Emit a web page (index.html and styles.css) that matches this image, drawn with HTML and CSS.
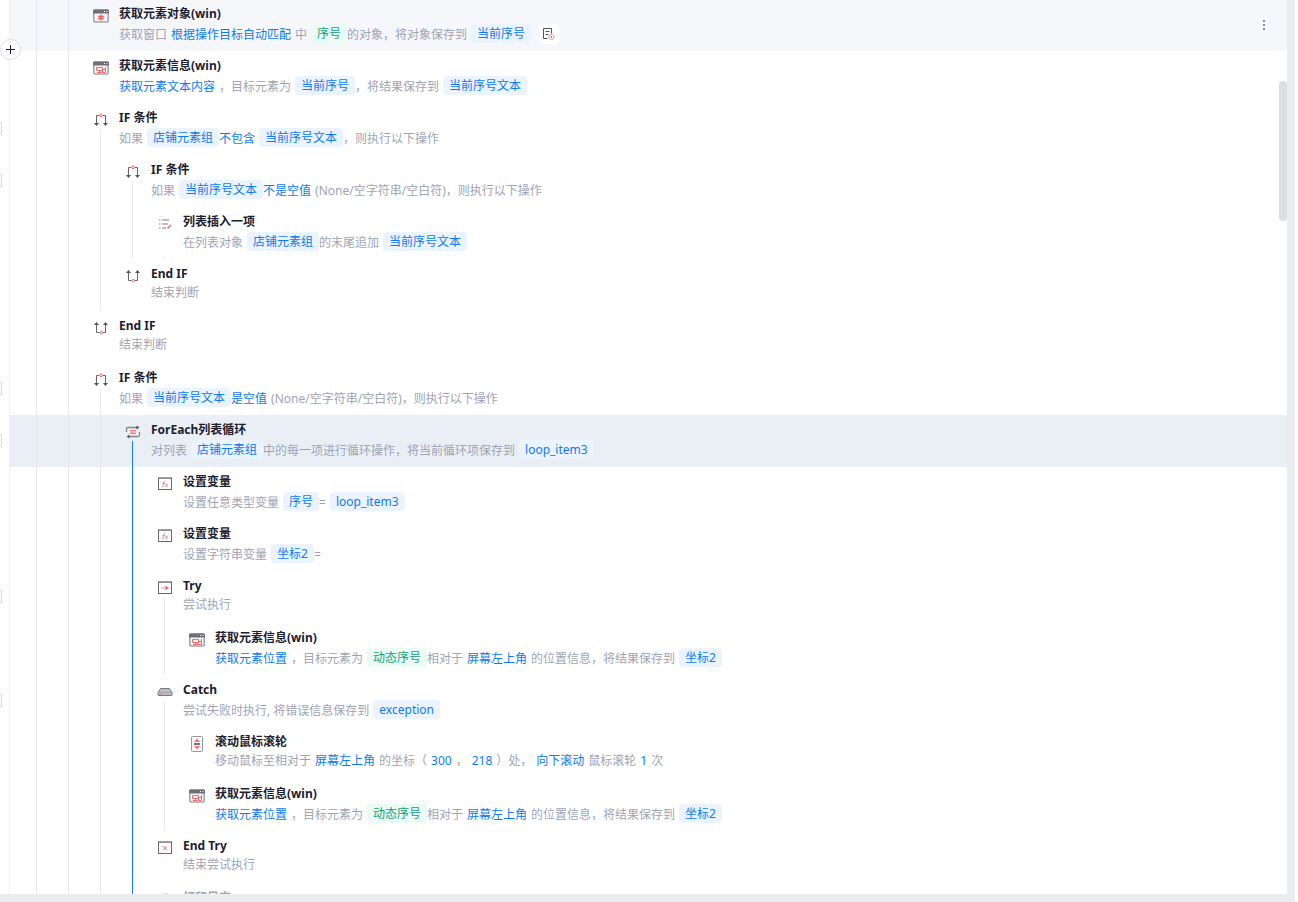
FILE: index.html
```
<!DOCTYPE html>
<html lang="zh-CN">

<head>
    <meta charset="UTF-8">
    <meta name="viewport" content="width=device-width, initial-scale=1.0">
    <title>流程编辑</title>
    <link rel="stylesheet" href="styles.css">
</head>

<body>
    <!-- 图标 -->
    <svg class="sprite" aria-hidden="true">
        <symbol id="i-window" viewBox="0 0 16 16">
            <rect x="0.8" y="2" width="14.4" height="12" rx="1" fill="#f6f6f8" stroke="#a5a5ad" stroke-width="1.6" />
            <path d="M0 5.500V3Q0 1.500 1.500 1.500H14.500Q16 1.500 16 3V5.500Z" fill="#6f6e78" />
            <path d="M11 3h1v1h-1zM13.500 3h1v1h-1z" fill="#fff" />
        </symbol>
        <symbol id="i-object" viewBox="0 0 16 16">
            <use href="#i-window" />
            <path d="M8 6.500v6M5.200 8l5.600 3M10.800 8l-5.600 3" stroke="#f96b6b" stroke-width="1.600" />
            <circle cx="8" cy="9.500" r="2" fill="#f96b6b" />
        </symbol>
        <symbol id="i-info" viewBox="0 0 16 16">
            <use href="#i-window" />
            <path d="M3.500 7.500h6v3h-6zM4 12.500h4M6.500 10.500v2M9.500 9.500h3v3h-3zM12.500 7v3" fill="none" stroke="#f96b6b" />
        </symbol>
        <symbol id="i-if" viewBox="0 0 16 16">
            <path d="M6 3.500H3.500V13M10 3.500h2.500V13" fill="none" stroke="#66656e" />
            <path d="M1 11h5L3.500 14zM10 11h5L12.500 14z" fill="#55545c" />
            <circle cx="8" cy="3.300" r="1.300" fill="#fff" stroke="#f95f5f" />
        </symbol>
        <symbol id="i-endif" viewBox="0 0 16 16">
            <path d="M6.500 12.500H3.500V3M10 12.500h2.500V3" fill="none" stroke="#66656e" />
            <path d="M1 5h5L3.500 2zM10 5h5L12.500 2z" fill="#55545c" />
            <circle cx="8.300" cy="12.700" r="1.300" fill="#fff" stroke="#f95f5f" />
        </symbol>
        <symbol id="i-list" viewBox="0 0 16 16">
            <path d="M2 4h1.500M2 8h1.500M2 12h1.500M5 4h7M5 8h6M5 12h4" stroke="#a6a6ad" stroke-width="1.500" />
            <path d="M10.500 12.500L14 9" stroke="#f95f5f" stroke-width="1.500" />
        </symbol>
        <symbol id="i-loop" viewBox="0 0 16 16">
            <path d="M1.500 8V5q0-1.500 1.500-1.500H13M14.500 8v3q0 1.500-1.500 1.500H3" fill="none" stroke="#86858d" stroke-width="1.300" />
            <path d="M11.500 1.500L14.500 3.500 11.500 5.500zM4.500 10.500L1.500 12.500 4.500 14.500z" fill="#55545c" />
            <path d="M5 6h6v4H5z" fill="#fbb5b5" />
            <path d="M5 6.500h6M5 9.500h6" stroke="#f98080" />
        </symbol>
        <symbol id="i-box" viewBox="0 0 16 16">
            <rect x="1.500" y="1.500" width="13" height="12" fill="#fff" stroke="#6a6973" />
            <path d="M1 1.500h14" stroke="#a0a0a8" />
            <path d="M2 2.500h12" stroke="#8d8d95" />
        </symbol>
        <symbol id="i-var" viewBox="0 0 16 16">
            <use href="#i-box" />
            <path d="M8.300 5.300c-1.300-.5-1.500.7-1.800 2.700s-.4 3.300-1.500 3M5.500 7.500h2.300M8.500 7.500l2 3.500M11.200 7.300L8 11" fill="none" stroke="#f97575" stroke-width=".9" />
        </symbol>
        <symbol id="i-try" viewBox="0 0 16 16">
            <use href="#i-box" />
            <path d="M4 8h5" stroke="#fab0b0" stroke-width="1.500" />
            <path d="M8.500 5.500L12 8l-3.500 2.500z" fill="#f96b6b" />
        </symbol>
        <symbol id="i-endtry" viewBox="0 0 16 16">
            <use href="#i-box" />
            <path d="M6 6.200l4 4M10 6.200l-4 4" stroke="#f95f5f" />
        </symbol>
        <symbol id="i-catch" viewBox="0 0 16 16">
            <path d="M3.500 4.500h9l2.500 4V11q0 .5-.5.5h-13q-.5 0-.5-.5V8.500z" fill="#bdbdc3" stroke="#7b7a83" />
            <path d="M1 8.500h14" stroke="#a5a5ad" />
            <path d="M2.500 10h2" stroke="#f95f5f" />
        </symbol>
        <symbol id="i-scroll" viewBox="0 0 16 16">
            <rect x="2.500" y="0.500" width="11" height="15" rx="1" fill="#f8f8f9" stroke="#96969e" />
            <path d="M5 6l3-3.500L11 6zM5 10l3 3.500L11 10z" fill="#f97575" />
            <path d="M5 8h6" stroke="#4b4a52" stroke-width="1.500" />
        </symbol>
        <symbol id="i-log" viewBox="0 0 16 16">
            <rect x="4.500" y="1.500" width="7" height="13" rx="2" fill="#fff" stroke="#a9a9b0" />
        </symbol>
    </svg>

    <main class="editor">
        <div class="flow">
            <div class="step hover">
                <div class="gutter"></div>
                <i class="guide"></i><i class="guide"></i>
                <div class="mark"><svg class="icon"><use href="#i-object" /></svg></div>
                <div class="info">
                    <h3 class="name">获取元素对象(win)</h3>
                    <p class="desc"><span>获取窗口</span><a href="#">根据操作目标自动匹配</a><span>中</span><b class="chip green">序号</b><span>的对象，将对象保存到</span><b class="chip">当前序号</b>
                        <button class="note" aria-label="备注">
                            <svg viewBox="0 0 14 14" width="14" height="14">
                                <path d="M5.500 11.500h-4v-10h8v5M3.500 4.500h4M3.500 7.500h3" fill="none" stroke="#4c5560" />
                                <circle cx="9.500" cy="10" r="2.500" fill="#fff" stroke="#f95f5f" stroke-dasharray="1.500 .6" />
                                <path d="M9.500 9v2" stroke="#f95f5f" />
                            </svg>
                        </button>
                    </p>
                </div>
                <button class="more" aria-label="更多"><i></i><i></i><i></i></button>
            </div>

            <div class="step">
                <div class="gutter"></div>
                <i class="guide"></i><i class="guide"></i>
                <div class="mark"><svg class="icon"><use href="#i-info" /></svg></div>
                <div class="info">
                    <h3 class="name">获取元素信息(win)</h3>
                    <p class="desc"><a href="#">获取元素文本内容</a><span>，目标元素为</span><b class="chip">当前序号</b><span>，将结果保存到</span><b class="chip">当前序号文本</b></p>
                </div>
            </div>

            <div class="step parent">
                <div class="gutter"><button class="fold" aria-label="折叠"></button></div>
                <i class="guide"></i><i class="guide"></i>
                <div class="mark"><svg class="icon"><use href="#i-if" /></svg></div>
                <div class="info">
                    <h3 class="name">IF 条件</h3>
                    <p class="desc"><span>如果</span><b class="chip">店铺元素组</b><a href="#">不包含</a><b class="chip">当前序号文本</b><span>，则执行以下操作</span></p>
                </div>
            </div>

            <div class="step parent">
                <div class="gutter"><button class="fold" aria-label="折叠"></button></div>
                <i class="guide"></i><i class="guide"></i><i class="guide"></i>
                <div class="mark"><svg class="icon"><use href="#i-if" /></svg></div>
                <div class="info">
                    <h3 class="name">IF 条件</h3>
                    <p class="desc"><span>如果</span><b class="chip">当前序号文本</b><a href="#">不是空值</a><span>(None/空字符串/空白符)，则执行以下操作</span></p>
                </div>
            </div>

            <div class="step">
                <div class="gutter"></div>
                <i class="guide"></i><i class="guide"></i><i class="guide"></i><i class="guide"></i>
                <div class="mark"><svg class="icon"><use href="#i-list" /></svg></div>
                <div class="info">
                    <h3 class="name">列表插入一项</h3>
                    <p class="desc"><span>在列表对象</span><b class="chip">店铺元素组</b><span>的末尾追加</span><b class="chip">当前序号文本</b></p>
                </div>
            </div>

            <div class="step">
                <div class="gutter"></div>
                <i class="guide"></i><i class="guide"></i><i class="guide"></i>
                <div class="mark"><svg class="icon"><use href="#i-endif" /></svg></div>
                <div class="info">
                    <h3 class="name">End IF</h3>
                    <p class="desc"><span>结束判断</span></p>
                </div>
            </div>

            <div class="step">
                <div class="gutter"></div>
                <i class="guide"></i><i class="guide"></i>
                <div class="mark"><svg class="icon"><use href="#i-endif" /></svg></div>
                <div class="info">
                    <h3 class="name">End IF</h3>
                    <p class="desc"><span>结束判断</span></p>
                </div>
            </div>

            <div class="step parent">
                <div class="gutter"><button class="fold" aria-label="折叠"></button></div>
                <i class="guide"></i><i class="guide"></i>
                <div class="mark"><svg class="icon"><use href="#i-if" /></svg></div>
                <div class="info">
                    <h3 class="name">IF 条件</h3>
                    <p class="desc"><span>如果</span><b class="chip">当前序号文本</b><a href="#">是空值</a><span>(None/空字符串/空白符)，则执行以下操作</span></p>
                </div>
            </div>

            <!-- 当前选中的循环 -->
            <div class="step parent selected">
                <div class="gutter"><button class="fold" aria-label="折叠"></button></div>
                <i class="guide"></i><i class="guide"></i><i class="guide"></i>
                <div class="mark"><svg class="icon"><use href="#i-loop" /></svg></div>
                <div class="info">
                    <h3 class="name">ForEach列表循环</h3>
                    <p class="desc"><span>对列表</span><b class="chip">店铺元素组</b><span>中的每一项进行循环操作，将当前循环项保存到</span><b class="chip">loop_item3</b></p>
                </div>
            </div>

            <div class="step">
                <div class="gutter"></div>
                <i class="guide"></i><i class="guide"></i><i class="guide"></i><i class="guide active"></i>
                <div class="mark"><svg class="icon"><use href="#i-var" /></svg></div>
                <div class="info">
                    <h3 class="name">设置变量</h3>
                    <p class="desc"><span>设置任意类型变量</span><b class="chip">序号</b><span>=</span><b class="chip">loop_item3</b></p>
                </div>
            </div>

            <div class="step">
                <div class="gutter"></div>
                <i class="guide"></i><i class="guide"></i><i class="guide"></i><i class="guide active"></i>
                <div class="mark"><svg class="icon"><use href="#i-var" /></svg></div>
                <div class="info">
                    <h3 class="name">设置变量</h3>
                    <p class="desc"><span>设置字符串变量</span><b class="chip">坐标2</b><span>=</span></p>
                </div>
            </div>

            <div class="step parent">
                <div class="gutter"><button class="fold" aria-label="折叠"></button></div>
                <i class="guide"></i><i class="guide"></i><i class="guide"></i><i class="guide active"></i>
                <div class="mark"><svg class="icon"><use href="#i-try" /></svg></div>
                <div class="info">
                    <h3 class="name">Try</h3>
                    <p class="desc"><span>尝试执行</span></p>
                </div>
            </div>

            <div class="step">
                <div class="gutter"></div>
                <i class="guide"></i><i class="guide"></i><i class="guide"></i><i class="guide active"></i><i class="guide"></i>
                <div class="mark"><svg class="icon"><use href="#i-info" /></svg></div>
                <div class="info">
                    <h3 class="name">获取元素信息(win)</h3>
                    <p class="desc"><a href="#">获取元素位置</a><span>，目标元素为</span><b class="chip green">动态序号</b><span>相对于</span><a href="#">屏幕左上角</a><span>的位置信息，将结果保存到</span><b class="chip">坐标2</b></p>
                </div>
            </div>

            <div class="step parent">
                <div class="gutter"><button class="fold" aria-label="折叠"></button></div>
                <i class="guide"></i><i class="guide"></i><i class="guide"></i><i class="guide active"></i>
                <div class="mark"><svg class="icon"><use href="#i-catch" /></svg></div>
                <div class="info">
                    <h3 class="name">Catch</h3>
                    <p class="desc"><span>尝试失败时执行, 将错误信息保存到</span><b class="chip">exception</b></p>
                </div>
            </div>

            <div class="step">
                <div class="gutter"></div>
                <i class="guide"></i><i class="guide"></i><i class="guide"></i><i class="guide active"></i><i class="guide"></i>
                <div class="mark"><svg class="icon"><use href="#i-scroll" /></svg></div>
                <div class="info">
                    <h3 class="name">滚动鼠标滚轮</h3>
                    <p class="desc"><span>移动鼠标至相对于</span><a href="#">屏幕左上角</a><span>的坐标（</span><a href="#">300</a><span>，</span><a href="#">218</a><span>）处，</span><a href="#">向下滚动</a><span>鼠标滚轮</span><a href="#">1</a><span>次</span></p>
                </div>
            </div>

            <div class="step">
                <div class="gutter"></div>
                <i class="guide"></i><i class="guide"></i><i class="guide"></i><i class="guide active"></i><i class="guide"></i>
                <div class="mark"><svg class="icon"><use href="#i-info" /></svg></div>
                <div class="info">
                    <h3 class="name">获取元素信息(win)</h3>
                    <p class="desc"><a href="#">获取元素位置</a><span>，目标元素为</span><b class="chip green">动态序号</b><span>相对于</span><a href="#">屏幕左上角</a><span>的位置信息，将结果保存到</span><b class="chip">坐标2</b></p>
                </div>
            </div>

            <div class="step">
                <div class="gutter"></div>
                <i class="guide"></i><i class="guide"></i><i class="guide"></i><i class="guide active"></i>
                <div class="mark"><svg class="icon"><use href="#i-endtry" /></svg></div>
                <div class="info">
                    <h3 class="name">End Try</h3>
                    <p class="desc"><span>结束尝试执行</span></p>
                </div>
            </div>

            <div class="step disabled">
                <div class="gutter"></div>
                <i class="guide"></i><i class="guide"></i><i class="guide"></i><i class="guide active"></i>
                <div class="mark"><svg class="icon"><use href="#i-log" /></svg></div>
                <div class="info">
                    <h3 class="name">打印日志</h3>
                </div>
            </div>
        </div>
        <button class="add" aria-label="添加指令"></button>
        <div class="thumb"></div>
    </main>
</body>

</html>
```
FILE: styles.css
```
* {
    padding: 0;
    margin: 0;
    box-sizing: border-box;
}

body {
    height: 100vh;
    padding-right: 3px;
    background-color: #fff;
    font-family: "Noto Sans", "Noto Sans CJK SC", sans-serif;
    font-size: 12px;
    overflow: hidden;
}

button {
    border: none;
    background: none;
    cursor: pointer;
}

a {
    color: #0d7bf5;
    text-decoration: none;
}

.sprite {
    position: absolute;
    width: 0;
    height: 0;
}

.editor {
    position: relative;
    height: 100%;
    border-right: 8px solid #ebecf0;
    border-bottom: 8px solid #ebecf0;
    overflow: hidden;
}

/* 列表已向下滚动1px */
.flow {
    margin-top: -1px;
}

.step {
    display: flex;
    height: 52px;
    background-color: #fff;
}

.step.hover {
    background-color: #f5f7fb;
}

.step.selected {
    background-color: #eaeff6;
}

.gutter {
    flex: none;
    width: 10px;
    margin-right: 26px;
    padding-top: 19px;
    border-right: 1px solid #efeff3;
    background-color: #fff;
    overflow: hidden;
}

.fold {
    display: block;
    width: 13px;
    height: 13px;
    margin-left: -11px;
    border: 1px solid #d9dadf;
}

/* 缩进线 */
.guide {
    flex: none;
    width: 32px;
    border-left: 1px solid #e6e7ef;
}

.guide.active {
    border-color: #1480f5;
}

.mark {
    flex: none;
    width: 16px;
    margin-left: -7px;
    margin-right: 10px;
    padding-top: 9px;
}

.icon {
    display: block;
    width: 16px;
    height: 16px;
}

.parent .mark::after {
    content: '';
    display: block;
    width: 1px;
    height: 26px;
    margin: 1px 0 0 7px;
    background-color: #e6e7ef;
}

.selected .mark::after {
    background-color: #1480f5;
}

.info {
    flex: 1;
    padding-top: 5px;
    white-space: nowrap;
}

.name {
    line-height: 20px;
    font-size: 12px;
    font-weight: 700;
    color: #1b2130;
}

.desc {
    display: flex;
    align-items: center;
    line-height: 18px;
    color: #9fa4b4;
}

.desc span,
.desc a {
    margin-right: 4px;
}

.chip {
    height: 19px;
    margin-bottom: 3px;
    padding: 0 6px;
    border-radius: 4px;
    background-color: #ebf3ff;
    color: #0d7bf5;
    line-height: 20px;
    font-weight: 400;
}

.chip.green {
    background-color: #eafbf4;
    color: #16a079;
}

.note {
    display: flex;
    align-items: center;
    justify-content: center;
    width: 20px;
    height: 20px;
    margin-bottom: 2px;
    margin-left: 8px;
    border-radius: 4px;
    background-color: #fff;
}

.more {
    display: flex;
    flex-direction: column;
    align-items: center;
    justify-content: center;
    gap: 2px;
    width: 16px;
    margin-right: 15px;
}

.more i {
    width: 2px;
    height: 2px;
    background-color: #858b9b;
}

.disabled .icon,
.disabled .name {
    opacity: .4;
}

/* 插入按钮 */
.add {
    position: absolute;
    left: 0;
    top: 39px;
    width: 21px;
    height: 21px;
    border: 1px solid #dcdde0;
    border-radius: 50%;
    background: linear-gradient(#1b2130, #1b2130) center / 9px 1px no-repeat,
        linear-gradient(#1b2130, #1b2130) center / 1px 9px no-repeat,
        #fff;
}

.thumb {
    position: absolute;
    right: 0;
    top: 81px;
    width: 8px;
    height: 140px;
    border-radius: 4px;
    background-color: #dddee2;
}
```
